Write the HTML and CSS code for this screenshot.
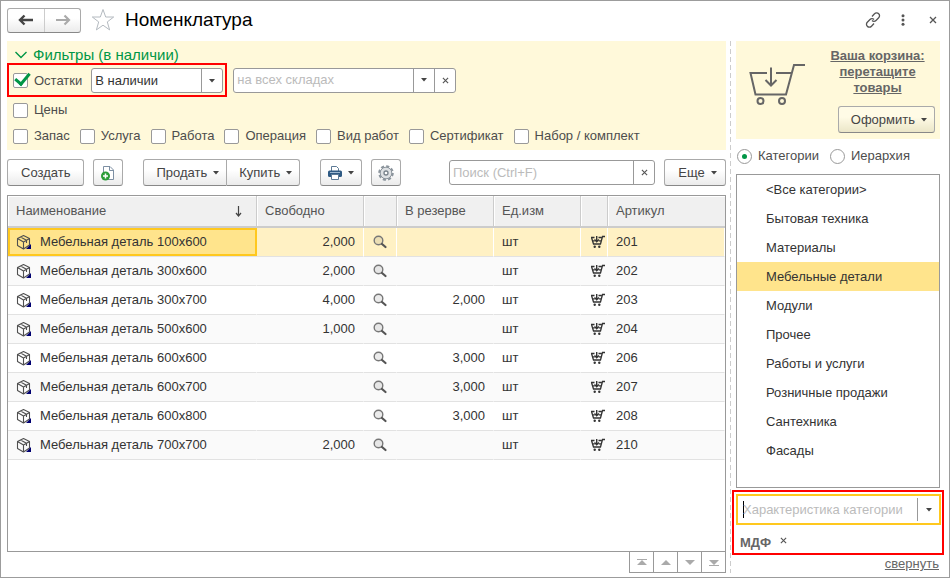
FILE: index.html
```html
<!DOCTYPE html>
<html lang="ru">
<head>
    <meta charset="UTF-8">
    <meta name="viewport" content="width=device-width, initial-scale=1.0">
    <title>Номенклатура</title>
    <link rel="stylesheet" href="styles.css">
</head>
<body>
    <!-- shared icons -->
    <svg class="sprite" aria-hidden="true">
        <symbol id="i-box" viewBox="0 0 16 16">
            <path d="M1.500 4.500 7.500 1.500l6 3V11l-6 4-6-3.500zM1.500 4.500l6 3.500 6-3.500M7.500 8v7M4.500 3l6 3.300V9" fill="none" stroke="#505050" stroke-width="1.100" stroke-linejoin="round"/>
            <path d="M15 10v5h-5z" fill="#000070"/>
        </symbol>
        <symbol id="i-search" viewBox="0 0 14 14">
            <circle cx="5.500" cy="5.500" r="4.300" fill="#000" fill-opacity=".08" stroke="#777" stroke-width="1.400"/>
            <path d="M9 9l3.500 3" fill="none" stroke="#555" stroke-width="2.200" stroke-linecap="round"/>
        </symbol>
        <symbol id="i-cart" viewBox="0 0 16 14">
            <path d="M1 2.500h3.500M8.500 2.500h3M1.500 2.500l2 6.500h7l2-7.500H15M2.800 5.800h2M8.700 5.800h2.300" fill="none" stroke="#333" stroke-width="1.300"/>
            <path d="M6.700 1v5M4.500 4.500l2.200 2.200 2.200-2.200" fill="none" stroke="#333" stroke-width="1.400"/>
            <circle cx="4.700" cy="11.700" r="1.200" fill="#333"/>
            <circle cx="9.300" cy="11.700" r="1.200" fill="#333"/>
        </symbol>
        <symbol id="i-down" viewBox="0 0 6 4">
            <path d="M0 0h6L3 3.500z" fill="#444"/>
        </symbol>
        <symbol id="i-close" viewBox="0 0 8 8">
            <path d="M1 1l6 6M7 1 1 7" fill="none" stroke="#555" stroke-width="1.300"/>
        </symbol>
    </svg>

    <div class="window">
        <header class="titlebar">
            <div class="history">
                <button type="button" aria-label="Назад">
                    <svg width="16" height="12" viewBox="0 0 16 12"><path d="M2 6h13M6.500 1.500 2 6l4.500 4.500" fill="none" stroke="#444" stroke-width="2.400"/></svg>
                </button>
                <button type="button" aria-label="Вперед">
                    <svg width="16" height="12" viewBox="0 0 16 12"><path d="M1 6h13M9.500 1.500 14 6l-4.500 4.500" fill="none" stroke="#aaa" stroke-width="2.200"/></svg>
                </button>
            </div>
            <button type="button" class="plain" aria-label="В избранное">
                <svg width="24" height="24" viewBox="0 0 24 24"><path d="M12 1.500l2.700 7.500h8l-6.400 4.900 2.300 8L12 17.200l-6.600 4.700 2.300-8L1.300 9h8z" fill="#fff" stroke="#b4bac0"/></svg>
            </button>
            <h1>Номенклатура</h1>
            <div class="window-tools">
                <button type="button" class="plain" aria-label="Ссылка">
                    <svg width="16" height="16" viewBox="0 0 16 16" fill="none" stroke="#555" stroke-width="1.300"><path d="M7 4.500l2.500-2.700a2.800 2.800 0 0 1 4.200 0 2.800 2.800 0 0 1 0 4L11 8.500a2.800 2.800 0 0 1-4 0"/><path d="M9 11.500l-2.500 2.700a2.800 2.800 0 0 1-4.200 0 2.800 2.800 0 0 1 0-4L5 7.500a2.800 2.800 0 0 1 4 0"/></svg>
                </button>
                <button type="button" class="plain" aria-label="Меню">
                    <svg width="4" height="12" viewBox="0 0 4 12" fill="#555"><circle cx="2" cy="1.700" r="1.500"/><circle cx="2" cy="6" r="1.500"/><circle cx="2" cy="10.300" r="1.500"/></svg>
                </button>
                <button type="button" class="plain" aria-label="Закрыть">
                    <svg width="8" height="8"><use href="#i-close"/></svg>
                </button>
            </div>
        </header>

        <div class="content">
            <main>
                <section class="filters">
                    <h2>
                        <svg width="14" height="8" viewBox="0 0 14 8"><path d="M1.500 1 7 6.500 12.500 1" fill="none" stroke="#009646" stroke-width="1.400"/></svg>
                        Фильтры (в наличии)
                    </h2>
                    <div class="filter-row">
                        <div class="marked stock">
                            <label class="check"><input type="checkbox" checked> Остатки</label>
                            <div class="field stock-select">
                                <select aria-label="Остатки">
                                    <option>В наличии</option>
                                </select>
                                <span class="field-btn"><svg width="6" height="4"><use href="#i-down"/></svg></span>
                            </div>
                        </div>
                        <div class="field warehouse">
                            <input type="text" placeholder="на всех складах" aria-label="Склад">
                            <button type="button" class="field-btn" aria-label="Выбрать"><svg width="6" height="4"><use href="#i-down"/></svg></button>
                            <button type="button" class="field-btn" aria-label="Очистить"><svg width="7" height="7"><use href="#i-close"/></svg></button>
                        </div>
                    </div>
                    <div class="checks">
                        <label class="check"><input type="checkbox"> Цены</label>
                    </div>
                    <div class="checks">
                        <label class="check"><input type="checkbox"> Запас</label>
                        <label class="check"><input type="checkbox"> Услуга</label>
                        <label class="check"><input type="checkbox"> Работа</label>
                        <label class="check"><input type="checkbox"> Операция</label>
                        <label class="check"><input type="checkbox"> Вид работ</label>
                        <label class="check"><input type="checkbox"> Сертификат</label>
                        <label class="check"><input type="checkbox"> Набор / комплект</label>
                    </div>
                </section>

                <div class="toolbar">
                    <button type="button" class="btn">Создать</button>
                    <button type="button" class="btn icon-btn" aria-label="Создать копированием">
                        <svg width="16" height="16" viewBox="0 0 16 16"><path d="M3.500 1.500H10L13.500 5v9.500h-10z" fill="#fff" stroke="#7d8fa3"/><path d="M9.500 1.500v4h4" fill="none" stroke="#7d8fa3"/><circle cx="5.500" cy="11" r="4.500" fill="#2c9c38"/><path d="M5.500 8.500v5M3 11h5" stroke="#fff" stroke-width="1.500"/></svg>
                    </button>
                    <div class="btn-group">
                        <button type="button" class="btn menu-btn">Продать <svg width="6" height="4"><use href="#i-down"/></svg></button>
                        <button type="button" class="btn menu-btn">Купить <svg width="6" height="4"><use href="#i-down"/></svg></button>
                    </div>
                    <button type="button" class="btn print-btn" aria-label="Печать">
                        <svg width="14" height="14" viewBox="0 0 14 14"><path d="M3.500 5V.5h5l2 2V5" fill="#fff" stroke="#5c7a96"/><rect y="4.500" width="14" height="6.500" rx="1.500" fill="#2f5a84"/><path d="M2 6.500h10" stroke="#9db7cf"/><path d="M3.500 8.500h7v5h-7z" fill="#fff" stroke="#5c7a96"/></svg>
                        <svg width="6" height="4"><use href="#i-down"/></svg>
                    </button>
                    <button type="button" class="btn icon-btn" aria-label="Настройки">
                        <svg width="16" height="16" viewBox="0 0 16 16"><circle cx="8" cy="8" r="6.600" fill="none" stroke="#8c959d" stroke-width="2.400" stroke-dasharray="3.100 2.080"/><circle cx="8" cy="8" r="5.800" fill="#dde0e3" stroke="#8c959d"/><circle cx="8" cy="8" r="2" fill="#fff" stroke="#77818a" stroke-width="1.300"/></svg>
                    </button>
                    <div class="field search">
                        <input type="text" placeholder="Поиск (Ctrl+F)" aria-label="Поиск">
                        <button type="button" class="field-btn" aria-label="Очистить"><svg width="7" height="7"><use href="#i-close"/></svg></button>
                    </div>
                    <button type="button" class="btn menu-btn more-btn">Еще <svg width="6" height="4"><use href="#i-down"/></svg></button>
                </div>

                <div class="grid">
                    <table>
                        <colgroup>
                            <col class="c-name"><col class="c-free"><col class="c-zoom"><col class="c-res"><col class="c-unit"><col class="c-cart"><col>
                        </colgroup>
                        <thead>
                            <tr>
                                <th><span class="sorted">Наименование <svg width="7" height="11" viewBox="0 0 7 11"><path d="M3.500 0v10M1 7l2.500 3L6 7" fill="none" stroke="#444" stroke-width="1.200"/></svg></span></th>
                                <th>Свободно</th>
                                <th></th>
                                <th>В резерве</th>
                                <th>Ед.изм</th>
                                <th></th>
                                <th>Артикул</th>
                            </tr>
                        </thead>
                        <tbody>
                            <tr class="selected">
                                <td><span class="name"><svg width="16" height="16"><use href="#i-box"/></svg>Мебельная деталь 100x600</span></td>
                                <td class="num">2,000</td>
                                <td class="ico"><svg width="14" height="14"><use href="#i-search"/></svg></td>
                                <td class="num"></td>
                                <td>шт</td>
                                <td class="ico"><svg width="16" height="14"><use href="#i-cart"/></svg></td>
                                <td>201</td>
                            </tr>
                            <tr>
                                <td><span class="name"><svg width="16" height="16"><use href="#i-box"/></svg>Мебельная деталь 300x600</span></td>
                                <td class="num">2,000</td>
                                <td class="ico"><svg width="14" height="14"><use href="#i-search"/></svg></td>
                                <td class="num"></td>
                                <td>шт</td>
                                <td class="ico"><svg width="16" height="14"><use href="#i-cart"/></svg></td>
                                <td>202</td>
                            </tr>
                            <tr>
                                <td><span class="name"><svg width="16" height="16"><use href="#i-box"/></svg>Мебельная деталь 300x700</span></td>
                                <td class="num">4,000</td>
                                <td class="ico"><svg width="14" height="14"><use href="#i-search"/></svg></td>
                                <td class="num">2,000</td>
                                <td>шт</td>
                                <td class="ico"><svg width="16" height="14"><use href="#i-cart"/></svg></td>
                                <td>203</td>
                            </tr>
                            <tr>
                                <td><span class="name"><svg width="16" height="16"><use href="#i-box"/></svg>Мебельная деталь 500x600</span></td>
                                <td class="num">1,000</td>
                                <td class="ico"><svg width="14" height="14"><use href="#i-search"/></svg></td>
                                <td class="num"></td>
                                <td>шт</td>
                                <td class="ico"><svg width="16" height="14"><use href="#i-cart"/></svg></td>
                                <td>204</td>
                            </tr>
                            <tr>
                                <td><span class="name"><svg width="16" height="16"><use href="#i-box"/></svg>Мебельная деталь 600x600</span></td>
                                <td class="num"></td>
                                <td class="ico"><svg width="14" height="14"><use href="#i-search"/></svg></td>
                                <td class="num">3,000</td>
                                <td>шт</td>
                                <td class="ico"><svg width="16" height="14"><use href="#i-cart"/></svg></td>
                                <td>206</td>
                            </tr>
                            <tr>
                                <td><span class="name"><svg width="16" height="16"><use href="#i-box"/></svg>Мебельная деталь 600x700</span></td>
                                <td class="num"></td>
                                <td class="ico"><svg width="14" height="14"><use href="#i-search"/></svg></td>
                                <td class="num">3,000</td>
                                <td>шт</td>
                                <td class="ico"><svg width="16" height="14"><use href="#i-cart"/></svg></td>
                                <td>207</td>
                            </tr>
                            <tr>
                                <td><span class="name"><svg width="16" height="16"><use href="#i-box"/></svg>Мебельная деталь 600x800</span></td>
                                <td class="num"></td>
                                <td class="ico"><svg width="14" height="14"><use href="#i-search"/></svg></td>
                                <td class="num">3,000</td>
                                <td>шт</td>
                                <td class="ico"><svg width="16" height="14"><use href="#i-cart"/></svg></td>
                                <td>208</td>
                            </tr>
                            <tr>
                                <td><span class="name"><svg width="16" height="16"><use href="#i-box"/></svg>Мебельная деталь 700x700</span></td>
                                <td class="num">2,000</td>
                                <td class="ico"><svg width="14" height="14"><use href="#i-search"/></svg></td>
                                <td class="num"></td>
                                <td>шт</td>
                                <td class="ico"><svg width="16" height="14"><use href="#i-cart"/></svg></td>
                                <td>210</td>
                            </tr>
                        </tbody>
                    </table>
                </div>
                <div class="pager">
                    <button type="button" aria-label="В начало"><svg width="10" height="7" viewBox="0 0 10 7"><path d="M0 0h10v1H0zM5 1l5 5H0z" fill="#aaa"/></svg></button>
                    <button type="button" aria-label="Вверх"><svg width="10" height="5" viewBox="0 0 10 5"><path d="M5 0l5 5H0z" fill="#aaa"/></svg></button>
                    <button type="button" aria-label="Вниз"><svg width="10" height="5" viewBox="0 0 10 5"><path d="M0 0h10L5 5z" fill="#aaa"/></svg></button>
                    <button type="button" aria-label="В конец"><svg width="10" height="7" viewBox="0 0 10 7"><path d="M0 6h10v1H0zM0 1h10L5 6z" fill="#aaa"/></svg></button>
                </div>
            </main>

            <aside>
                <section class="basket">
                    <svg width="56" height="44" viewBox="0 0 56 44" fill="none" stroke="#666" stroke-width="2"><path d="M18 11H1.500l5 21.500H37L45 3h11M27 11h16M22 5.500V24M16.500 18l5.500 5.500 5.500-5.500"/><circle cx="11.500" cy="39" r="3"/><circle cx="33" cy="39" r="3"/></svg>
                    <div class="basket-info">
                        <a href="#">Ваша корзина: перетащите товары</a>
                        <button type="button" class="btn menu-btn">Оформить <svg width="6" height="4"><use href="#i-down"/></svg></button>
                    </div>
                </section>
                <div class="view-mode">
                    <label class="check"><input type="radio" name="view" checked> Категории</label>
                    <label class="check"><input type="radio" name="view"> Иерархия</label>
                </div>
                <ul class="categories">
                    <li>&lt;Все категории&gt;</li>
                    <li>Бытовая техника</li>
                    <li>Материалы</li>
                    <li class="active">Мебельные детали</li>
                    <li>Модули</li>
                    <li>Прочее</li>
                    <li>Работы и услуги</li>
                    <li>Розничные продажи</li>
                    <li>Сантехника</li>
                    <li>Фасады</li>
                </ul>
                <div class="marked property">
                    <div class="property-field">
                        <input type="text" placeholder="Характеристика категории" aria-label="Характеристика категории">
                        <button type="button" aria-label="Выбрать"><svg width="6" height="4"><use href="#i-down"/></svg></button>
                    </div>
                    <div class="tag">МДФ <button type="button" class="plain" aria-label="Убрать"><svg width="7" height="7"><use href="#i-close"/></svg></button></div>
                </div>
                <a href="#" class="collapse">свернуть</a>
            </aside>
        </div>
    </div>
</body>
</html>
```

FILE: styles.css
```css
* {
    box-sizing: border-box;
}
body {
    margin: 0;
    font-family: "Liberation Sans", Arial, sans-serif;
    font-size: 13px;
    line-height: 16px;
    color: #333;
    background-color: #fff;
}
button, input, select {
    font: inherit;
    color: inherit;
    margin: 0;
}
button {
    padding: 0;
    cursor: pointer;
}
svg {
    display: block;
    flex: none;
}
.sprite {
    position: absolute;
    width: 0;
    height: 0;
}
.window {
    display: flex;
    flex-direction: column;
    min-height: 100vh;
    border: 1px solid #9c9c9c;
}
.plain {
    border: none;
    background: none;
}

/* title bar */
.titlebar {
    display: flex;
    align-items: center;
    gap: 10px;
    height: 40px;
    padding: 0 12px 2px 6px;
}
.history {
    display: flex;
    border: 1px solid #aaa;
    border-bottom-color: #888;
    border-radius: 3px;
    background: linear-gradient(#fff 40%, #ebebeb);
}
.history button {
    display: flex;
    align-items: center;
    justify-content: center;
    width: 36px;
    height: 23px;
    border: none;
    background: none;
}
.history button + button {
    border-left: 1px solid #ccc;
}
h1 {
    margin: 0;
    font-size: 19px;
    line-height: 24px;
    font-weight: normal;
    color: #000;
}
.window-tools {
    display: flex;
    align-items: center;
    gap: 20px;
    margin-left: auto;
}
.window-tools .plain:last-child {
    margin-left: 4px;
}

.content {
    display: flex;
    flex: 1;
    padding: 0 5px 4px 6px;
}
main {
    display: flex;
    flex-direction: column;
    flex: 1;
    min-width: 0;
    margin-right: 4px;
}

/* filters */
.filters {
    padding: 6px 0 1px;
    background-color: #fff9da;
}
h2 {
    display: flex;
    align-items: center;
    gap: 5px;
    margin: 0 7px;
    font-size: 15px;
    line-height: 16px;
    font-weight: normal;
    color: #009646;
}
.filter-row {
    display: flex;
    align-items: center;
    gap: 6px;
}
.marked {
    border: 2px solid #f00;
}
.stock {
    display: flex;
    align-items: center;
    gap: 9px;
    padding: 3px 2px 2px 4px;
}
.check {
    display: flex;
    align-items: center;
    gap: 6px;
    color: #4d4d4d;
}
.check input {
    appearance: none;
    display: grid;
    place-items: center;
    width: 15px;
    height: 15px;
    border: 1px solid #999;
    border-radius: 2px;
    background-color: #fff;
}
.check input[type="checkbox"]:checked::before {
    content: "";
    width: 6px;
    height: 12px;
    margin: -6px 0 0 3px;
    border: solid #009646;
    border-width: 0 3px 3px 0;
    transform: rotate(40deg);
}
.check input[type="radio"] {
    border-radius: 50%;
}
.check input[type="radio"]:checked::before {
    content: "";
    width: 5px;
    height: 5px;
    border-radius: 50%;
    background-color: #009646;
}
.checks {
    display: flex;
    gap: 10px;
    padding: 5px 6px;
}
.field {
    display: flex;
    height: 25px;
    border: 1px solid #999;
    border-radius: 3px;
    background-color: #fff;
    overflow: hidden;
}
.field input,
.field select {
    flex: 1;
    min-width: 0;
    padding: 0 3px;
    border: none;
    outline: none;
    background: none;
}
.field select {
    appearance: none;
}
.field-btn {
    display: flex;
    align-items: center;
    justify-content: center;
    width: 21px;
    border: none;
    border-left: 1px solid #999;
    background: none;
}
::placeholder {
    color: #bbb;
    opacity: 1;
}
.stock-select {
    width: 132px;
}
.stock-select .field-btn {
    pointer-events: none;
}
.warehouse {
    width: 223px;
}

/* toolbar */
.toolbar {
    display: flex;
    align-items: center;
    gap: 9px;
    padding: 9px 0;
}
.btn {
    display: flex;
    align-items: center;
    justify-content: center;
    gap: 6px;
    height: 27px;
    padding: 0 13px;
    border: 1px solid #aaa;
    border-bottom-color: #888;
    border-radius: 3px;
    background: linear-gradient(#fff 40%, #ebebeb);
    color: #444;
    white-space: nowrap;
}
.menu-btn {
    padding: 0 7px 0 12px;
}
.more-btn {
    min-width: 62px;
}
.icon-btn {
    width: 30px;
    padding: 0;
}
.print-btn {
    padding: 0 7px;
}
.btn-group {
    display: flex;
    margin: 0 11px;
}
.btn-group .btn:first-child {
    border-radius: 3px 0 0 3px;
}
.btn-group .btn + .btn {
    border-left: none;
    border-radius: 0 3px 3px 0;
}
.search {
    width: 206px;
    margin-left: auto;
}

/* items table */
.grid {
    flex: 1;
    border: 1px solid #999;
}
table {
    width: 100%;
    table-layout: fixed;
    border-collapse: separate;
    border-spacing: 0;
}
.c-name { width: 249px; }
.c-free { width: 107px; }
.c-zoom { width: 33px; }
.c-res { width: 97px; }
.c-unit { width: 87px; }
.c-cart { width: 27px; }
th, td {
    padding: 0 8px;
    text-align: left;
    font-weight: normal;
}
th {
    height: 32px;
    border-right: 1px solid #ccc;
    border-bottom: 2px solid #ccc;
    box-shadow: inset 1px 1px #fff;
    background-color: #f0f0f0;
    color: #555;
}
th:last-child {
    border-right: none;
}
td {
    height: 29px;
    border-bottom: 1px solid #e2e2e2;
    border-right: 1px solid transparent;
}
tbody tr:nth-child(even) {
    background-color: #fafafa;
}
.selected td {
    border-right-color: #fff;
    background-color: #fff1c4;
}
.selected td:first-child {
    border-right: none;
    background-color: #ffe48c;
    box-shadow: inset 0 0 0 2px #ffc81e;
}
.sorted {
    display: flex;
    align-items: center;
    justify-content: space-between;
    padding-right: 6px;
}
.name {
    display: flex;
    align-items: center;
    gap: 8px;
    white-space: nowrap;
}
.num {
    text-align: right;
}
.ico {
    padding: 0 0 0 9px;
}
.pager {
    display: flex;
    align-self: flex-end;
    border-left: 1px solid #999;
}
.pager button {
    display: flex;
    align-items: center;
    justify-content: center;
    width: 24px;
    height: 21px;
    border: 1px solid #999;
    border-width: 0 1px 1px 0;
    background-color: #fff;
}

/* side panel */
aside {
    display: flex;
    flex-direction: column;
    flex: 0 0 214px;
    min-width: 0;
    padding-left: 2px;
    background: repeating-linear-gradient(#ccc 0 5px, transparent 5px 8px) no-repeat left / 1px 100%;
}
.basket {
    display: flex;
    align-items: flex-start;
    gap: 15px;
    margin: 0 4px;
    padding: 7px 5px 6px 13px;
    background-color: #fff9da;
}
.basket > svg {
    margin-top: 14px;
}
.basket-info {
    display: flex;
    flex-direction: column;
    align-items: flex-end;
    flex: 1;
    gap: 10px;
}
.basket-info a {
    align-self: stretch;
    text-align: center;
    font-weight: bold;
    color: #666;
}
.basket .btn {
    background: linear-gradient(#fffbe6 40%, #ebe6c8);
}
.view-mode {
    display: flex;
    gap: 11px;
    padding: 9px 5px 10px;
}
.categories {
    flex: 1;
    margin: 0 4px;
    padding: 0;
    border: 1px solid #999;
    list-style: none;
}
.categories li {
    padding: 0 29px;
    line-height: 29px;
}
.categories .active {
    background-color: #ffe48c;
}
.property {
    margin-top: 2px;
    padding: 2px 1px 2px 2px;
}
.property-field {
    display: flex;
    height: 31px;
    border: 2px solid #ffc81e;
}
.property-field input {
    flex: 1;
    min-width: 0;
    padding: 0 5px;
    border: none;
    outline: none;
    background: linear-gradient(#000, #000) no-repeat 5px center / 1px 17px;
}
.property-field button {
    display: flex;
    align-items: center;
    justify-content: center;
    width: 22px;
    margin: 2px 0;
    border: none;
    border-left: 1px solid #999;
    background: none;
}
.tag {
    display: flex;
    align-items: flex-start;
    gap: 9px;
    padding: 10px 4px 0;
    font-weight: bold;
    color: #666;
}
.tag .plain {
    padding-top: 2px;
}
.collapse {
    align-self: flex-end;
    margin-right: 5px;
    line-height: 18px;
    color: #666;
}
```
